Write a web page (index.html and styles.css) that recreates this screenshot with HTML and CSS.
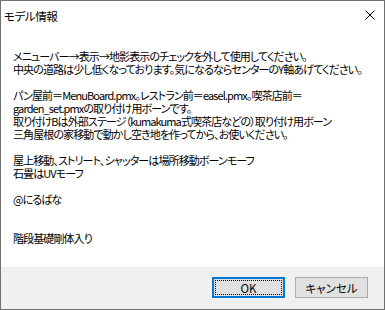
FILE: index.html
```html
<!DOCTYPE html>
<html lang="ja">
<head>
    <meta charset="UTF-8">
    <meta name="viewport" content="width=device-width, initial-scale=1.0">
    <title>モデル情報</title>
    <link rel="stylesheet" href="styles.css">
</head>
<body>
    <div class="dialog">
        <div class="titlebar">
            <span class="title">モデル情報</span>
            <span class="close">
                <svg width="10" height="10" viewBox="0 0 10 10">
                    <path d="M0.5 0.5 L9.5 9.5 M9.5 0.5 L0.5 9.5" stroke="#000" stroke-width="1" fill="none"/>
                </svg>
            </span>
        </div>

        <div class="content">
            <p>メニューバー→表示→地影表示のチェックを外して使用してください。<br>中央の道路は少し低くなっております。気になるならセンターのY軸あげてください。</p>
            <p>パン屋前＝MenuBoard.pmx。レストラン前＝easel.pmx。喫茶店前＝<br>garden_set.pmxの取り付け用ボーンです。<br>取り付けBは外部ステージ（kumakuma式喫茶店などの）取り付け用ボーン<br>三角屋根の家移動で動かし空き地を作ってから、お使いください。</p>
            <p>屋上移動、ストリート、シャッターは場所移動ボーンモーフ<br>石畳はUVモーフ</p>
            <p class="gap">@にるばな</p>
            <p>階段基礎剛体入り</p>
        </div>

        <div class="footer">
            <button class="btn default"><span>OK</span></button>
            <button class="btn">キャンセル</button>
        </div>
    </div>
</body>
</html>
```

FILE: styles.css
```css
body {
    margin: 0;
    font-family: "Noto Sans CJK JP", "Noto Sans", sans-serif;
    font-size: 12px;
    color: #000;
    background: #fff;
}
.dialog {
    width: 385px;
    height: 310px;
    box-sizing: border-box;
    border: 1px solid #707070;
    display: flex;
    flex-direction: column;
    background: #fff;
}
.titlebar {
    height: 30px;
    display: flex;
    align-items: center;
    justify-content: space-between;
    padding: 0 9px 0 3px;
}
.title {
    font-size: 11.5px;
    letter-spacing: -0.4px;
    font-feature-settings: "palt";
    margin-top: -1px;
}
.close {
    display: flex;
    margin-top: -2px;
}
.content {
    flex: 1;
    padding: 19px 0 0 12px;
    font-size: 11px;
    letter-spacing: -0.9px;
    font-feature-settings: "palt";
    line-height: 13px;
    white-space: nowrap;
}
.content p {
    margin: 0 0 13px;
}
.content p.gap {
    margin-bottom: 26px;
}
.footer {
    height: 42px;
    background: #f0f0f0;
    display: flex;
    justify-content: flex-end;
    align-items: flex-start;
    gap: 10px;
    padding: 10px 16px 0 0;
    box-sizing: border-box;
}
.btn {
    width: 73px;
    height: 21px;
    box-sizing: border-box;
    border: 1px solid #adadad;
    background: #e1e1e1;
    font-family: inherit;
    font-size: 11.5px;
    font-feature-settings: "palt";
    color: #000;
    padding: 0;
    display: flex;
    align-items: center;
    justify-content: center;
}
.btn.default {
    border: 2px solid #0078d7;
    padding: 1px;
}
.btn.default span {
    flex: 1;
    align-self: stretch;
    display: flex;
    align-items: center;
    justify-content: center;
    border: 1px dotted #000;
}
```
